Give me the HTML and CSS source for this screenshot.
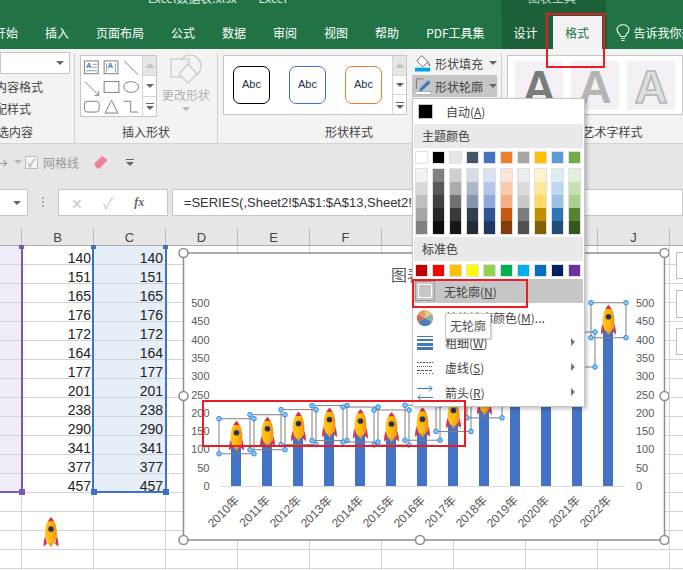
FILE: index.html
```html
<!DOCTYPE html>
<html lang="zh-CN">
<head>
  <meta charset="UTF-8">
  <title>Excel数据表.xlsx - Excel</title>
  <link rel="stylesheet" href="styles.css">
</head>
<body>
<svg class="defs" width="0" height="0">
  <defs>
    <linearGradient id="bodyGrad" x1="0" x2="1" y1="0" y2="0">
      <stop offset="0" stop-color="#ffc61a"/>
      <stop offset="0.55" stop-color="#fdb813"/>
      <stop offset="1" stop-color="#f08c0a"/>
    </linearGradient>
    <symbol id="rocket" viewBox="0 0 16 31">
      <path d="M2.200 19C1 22 .4 26 .6 30C1.500 28.500 2.600 27.600 4 27Z" fill="#e0314a"/>
      <path d="M13.800 19C15 22 15.600 26 15.400 30C14.500 28.500 13.400 27.600 12 27Z" fill="#e0314a"/>
      <path d="M5 25.500H11L8 30.500Z" fill="#f7941d"/>
      <path d="M4.800 4C2.600 8 1.800 15 2.200 19C2.600 22.500 4.300 25 5.300 26.500H10.700C11.700 25 13.400 22.500 13.800 19C14.200 15 13.400 8 11.200 4Z" fill="url(#bodyGrad)"/>
      <path d="M8 0C7 1 6 2.500 4.900 4.300H11.100C10 2.500 9 1 8 0Z" fill="#dc2f45"/>
      <circle cx="8" cy="12" r="3.400" fill="#e8900c"/>
      <circle cx="8" cy="12" r="2.600" fill="#1d2f5f"/>
    </symbol>
  </defs>
</svg>

<div class="title-bar">
  <span class="doc-name">Excel数据表.xlsx</span>
  <span class="app-name">Excel</span>
  <span class="context-name">图表工具</span>
</div>

<div class="tab-bar">
  <span class="tab tab-cut">开始</span>
  <span class="tab">插入</span>
  <span class="tab">页面布局</span>
  <span class="tab">公式</span>
  <span class="tab">数据</span>
  <span class="tab">审阅</span>
  <span class="tab">视图</span>
  <span class="tab">帮助</span>
  <span class="tab">PDF工具集</span>
  <div class="context-tabs">
    <span class="tab">设计</span>
    <span class="tab tab-active">格式</span>
  </div>
  <div class="tell-me">
    <svg width="14" height="18" viewBox="0 0 14 18" fill="none" stroke="#fff" stroke-width="1.100">
      <path d="M4.500 12.500C4.500 10 1 9 1 5.600C1 2.800 3.700 .8 7 .8S13 2.800 13 5.600C13 9 9.500 10 9.500 12.500Z"/>
      <path d="M5 14.500H9M5.500 16.500H8.500"/>
    </svg>
    <span>告诉我你想要做什么</span>
  </div>
</div>

<div class="ribbon">
  <div class="group group-left">
    <div class="combo"><i class="arrow"></i></div>
    <div class="cut cut-a">内容格式</div>
    <div class="cut cut-b">配样式</div>
    <div class="cut cut-c">选内容</div>
  </div>

  <div class="group group-shapes">
    <div class="group-main">
      <div class="shape-gallery">
        <svg width="62" height="60" viewBox="0 0 62 60" fill="none" stroke="#7f7f7f">
          <rect x="3.500" y="4.500" width="14" height="13"/>
          <path d="M12 8H16M12 11H16M5 14.500H16" stroke="#999"/>
          <text x="5" y="12" class="shape-a" stroke="none">A</text>
          <rect x="23.500" y="4.500" width="14" height="13"/>
          <path d="M26 7V16M35 7V16" stroke="#999"/>
          <text x="27" y="12" class="shape-a" stroke="none">A</text>
          <path d="M44 4.500L58 18.500M4 25.500L18 39.500M18 39.500V35M18 39.500H13.500"/>
          <rect x="23.500" y="25.500" width="15" height="11"/>
          <ellipse cx="51" cy="31" rx="7.500" ry="5.500"/>
          <rect x="3.500" y="45.500" width="15" height="11" rx="3"/>
          <path d="M31 44.500L37.500 57.500H24.500Z"/>
          <path d="M43 45.500H50.500V56.500H58"/>
        </svg>
        <div class="gallery-scroll">
          <span class="scroll-btn scroll-off"><i class="arrow-up"></i></span>
          <span class="scroll-btn"><i class="arrow"></i></span>
          <span class="scroll-btn"><i class="arrow-more"></i></span>
        </div>
      </div>
      <div class="change-shape">
        <svg width="32" height="30" viewBox="0 0 32 30" fill="#f3f3f3" stroke="#c9c9c9" stroke-width="1.200">
          <circle cx="20" cy="12" r="11"/>
          <rect x="1" y="5" width="18" height="18"/>
          <path d="M18 10L27 20L18 29L9 20Z" fill="#f5f5f5"/>
        </svg>
        <span>更改形状</span>
        <i class="arrow arrow-off"></i>
      </div>
    </div>
    <div class="group-label">插入形状</div>
  </div>

  <div class="group group-styles">
    <div class="group-main">
      <div class="style-gallery">
        <div class="abc-list">
          <span class="abc abc-black">Abc</span>
          <span class="abc abc-blue">Abc</span>
          <span class="abc abc-orange">Abc</span>
        </div>
        <div class="gallery-scroll">
          <span class="scroll-btn scroll-off"><i class="arrow-up"></i></span>
          <span class="scroll-btn"><i class="arrow"></i></span>
          <span class="scroll-btn"><i class="arrow-more"></i></span>
        </div>
      </div>
      <div class="style-cmds">
        <div class="cmd">
          <svg width="18" height="18" viewBox="0 0 18 18">
            <path d="M7 1L14 8L8 13L2 7Z" fill="#fff" stroke="#666"/>
            <path d="M14 8C15.500 10 16.500 11 16 12.500C15 13 14 11 14 8Z" fill="#666"/>
            <rect x="0" y="14" width="16" height="4" fill="#00a2e8"/>
          </svg>
          <span>形状填充</span>
          <i class="arrow"></i>
        </div>
        <div class="cmd cmd-open">
          <svg width="18" height="18" viewBox="0 0 18 18">
            <path d="M1.500 1.500H9M1.500 1.500V12" stroke="#777" fill="none"/>
            <path d="M5 12L14 3L16.500 5.500L7.500 14L4.500 14.800Z" fill="#3f79c2"/>
            <rect x="0" y="15" width="17" height="3" fill="#fff" stroke="#888" stroke-width=".5"/>
          </svg>
          <span>形状轮廓</span>
          <i class="arrow"></i>
        </div>
      </div>
    </div>
    <div class="group-label label-styles">形状样式</div>
  </div>

  <div class="group group-art">
    <div class="art-gallery">
      <span class="art art-dark">A</span>
      <span class="art art-light">A</span>
      <span class="art art-outline">A</span>
    </div>
    <div class="group-label label-art">艺术字样式</div>
  </div>
</div>

<div class="quick-bar">
  <span class="quick-arrow">→</span>
  <i class="arrow arrow-off"></i>
  <span class="check">✓</span>
  <span class="quick-text">网格线</span>
  <svg class="eraser" width="14" height="14" viewBox="0 0 14 14">
    <path d="M0 9L8 1L13.500 5L5.500 13.500H3Z" fill="#ec8296"/>
  </svg>
  <i class="arrow-more quick-more"></i>
</div>

<div class="formula-bar">
  <div class="name-box"><i class="arrow"></i></div>
  <span class="dots"></span>
  <div class="fx-box">
    <span class="fx-cancel">✕</span>
    <span class="fx-enter">✓</span>
    <span class="fx-label">fx</span>
  </div>
  <div class="formula-input">=SERIES(,Sheet2!$A$1:$A$13,Sheet2!$B$1:$B$13,1)</div>
</div>

<div class="sheet">
  <div class="col-head" id="colHead"></div>
  <div id="rows"></div>

  <div class="sel sel-a"></div>
  <div class="sel sel-c"></div>
  <i class="grip grip-purple grip-a1"></i>
  <i class="grip grip-purple grip-a2"></i>
  <i class="grip grip-b1"></i>
  <i class="grip grip-c1"></i>
  <i class="grip grip-b2"></i>
  <i class="grip grip-c2"></i>

  <svg class="sheet-rocket" width="16" height="31"><use href="#rocket"/></svg>
</div>

<div class="flyout flyout-1"></div>
<div class="flyout flyout-2"></div>
<div class="flyout flyout-3"></div>

<div class="chart">
  <svg id="chart" width="491" height="298" viewBox="178 247 491 298"></svg>
</div>

<div class="menu">
  <div class="menu-auto">
    <span class="auto-swatch"></span>
    <span>自动(<u>A</u>)</span>
  </div>
  <div class="menu-head">主题颜色</div>
  <div class="palette theme-row" id="themeRow"></div>
  <div class="palette shade-row" id="shadeRow"></div>
  <div class="menu-head std-head">标准色</div>
  <div class="palette std-row" id="stdRow"></div>
  <div class="menu-item menu-none">
    <span class="none-icon"><i></i></span>
    <span>无轮廓(<u>N</u>)</span>
  </div>
  <div class="menu-item">
    <span class="item-icon">
      <svg width="16" height="16" viewBox="0 0 16 16">
        <path d="M8 8L8 0A8 8 0 0 1 15 4Z" fill="#e6c98c"/>
        <path d="M8 8L15 4A8 8 0 0 1 15 12Z" fill="#8fb39a"/>
        <path d="M8 8L15 12A8 8 0 0 1 1 12Z" fill="#4f7fb8"/>
        <path d="M8 8L1 12A8 8 0 0 1 1 4Z" fill="#d9694f"/>
        <path d="M8 8L1 4A8 8 0 0 1 8 0Z" fill="#e79a6c"/>
      </svg>
    </span>
    <span>其他轮廓颜色(<u>M</u>)...</span>
  </div>
  <div class="menu-item">
    <span class="item-icon">
      <svg width="16" height="14" viewBox="0 0 16 14" fill="#3f79b8">
        <rect y="0" width="16" height="1"/><rect y="3" width="16" height="2"/><rect y="7" width="16" height="3"/><rect y="11" width="16" height="3"/>
      </svg>
    </span>
    <span>粗细(<u>W</u>)</span>
    <i class="sub-arrow"></i>
  </div>
  <div class="menu-item">
    <span class="item-icon">
      <svg width="16" height="12" viewBox="0 0 16 12" stroke="#555" fill="none">
        <path d="M0 .5H16" stroke-dasharray="2 1"/><path d="M0 4.500H16" stroke-dasharray="1 1"/><path d="M0 8.500H16" stroke-dasharray="3 1"/><path d="M0 11.500H16" stroke-dasharray="1 2"/>
      </svg>
    </span>
    <span>虚线(<u>S</u>)</span>
    <i class="sub-arrow"></i>
  </div>
  <div class="menu-item">
    <span class="item-icon">
      <svg width="16" height="16" viewBox="0 0 16 16" stroke="#3f79b8" fill="none">
        <path d="M0 3.500H15M12 .5L15 3.500L12 6.500M16 12.500H1M4 9.500L1 12.500L4 15.500"/>
      </svg>
    </span>
    <span>箭头(<u>R</u>)</span>
    <i class="sub-arrow"></i>
  </div>
</div>

<div class="tooltip">无轮廓</div>

<div class="mark mark-tab"></div>
<div class="mark mark-none"></div>
<div class="mark mark-chart"></div>

<script src="script.js"></script>
</body>
</html>
```

FILE: styles.css
```css
* {
  box-sizing: border-box;
}
html, body {
  margin: 0;
  height: 100%;
  overflow: hidden;
}
body {
  position: relative;
  width: 683px;
  height: 570px;
  background: #e6e6e6;
  color: #444;
  font: 12px "Noto Sans CJK SC", "Liberation Sans", sans-serif;
  overflow: hidden;
}
i {
  display: block;
}
.defs {
  position: absolute;
}

/* arrows */
.arrow {
  width: 0;
  height: 0;
  border-left: 4px solid transparent;
  border-right: 4px solid transparent;
  border-top: 4px solid #666;
}
.arrow-off {
  border-top-color: #b5b5b5;
}
.arrow-up {
  width: 0;
  height: 0;
  border-left: 5px solid transparent;
  border-right: 5px solid transparent;
  border-bottom: 5px solid #c4c4c4;
}
.arrow-more {
  width: 8px;
  height: 6px;
  border-top: 1px solid #666;
  position: relative;
}
.arrow-more::after {
  content: "";
  position: absolute;
  left: 0;
  top: 2px;
  border-left: 4px solid transparent;
  border-right: 4px solid transparent;
  border-top: 4px solid #666;
}

/* title and tabs */
.title-bar {
  height: 16px;
  background: linear-gradient(90deg, #217346 501px, #1b6039 501px, #1b6039 606px, #217346 606px);
  color: #dfeee5;
  font-size: 12px;
  line-height: 16px;
  overflow: hidden;
  display: flex;
  padding-left: 148px;
  position: relative;
}
.title-bar span {
  margin-top: -10px;
}
.app-name {
  margin-left: 22px;
}
.context-name {
  margin-left: 241px;
  color: #b9d5c5;
}
.tab-bar {
  height: 33px;
  background: #217346;
  color: #fff;
  display: flex;
  align-items: center;
  gap: 27px;
  overflow: hidden;
}
.tab {
  line-height: 33px;
  white-space: nowrap;
}
.tab-cut {
  margin-left: -6px;
}
.context-tabs {
  display: flex;
  margin-left: -10px;
  height: 33px;
  background: #1b6039;
  padding-left: 12px;
  gap: 15px;
  width: 105px;
  flex: none;
}
.tab-active {
  width: 49px;
  height: 33px;
  background: #f3f3f3;
  color: #217346;
  text-align: center;
  flex: none;
}
.tell-me {
  display: flex;
  align-items: center;
  gap: 4px;
  margin-left: -18px;
  white-space: nowrap;
}

/* ribbon */
.ribbon {
  height: 95px;
  background: #f3f3f3;
  border-bottom: 1px solid #d4d4d4;
  display: flex;
  overflow: hidden;
}
.group {
  position: relative;
  height: 90px;
  margin-top: 4px;
  border-right: 1px solid #d0d0d0;
  flex: none;
}
.group-left {
  width: 75px;
}
.combo {
  width: 70px;
  height: 22px;
  margin-top: -1px;
  background: #fff;
  border: 1px solid #c6c6c6;
  display: flex;
  align-items: center;
  justify-content: flex-end;
  padding-right: 5px;
}
.cut {
  line-height: 22px;
  white-space: nowrap;
}
.cut-a {
  margin: 2px 0 0 -5px;
}
.cut-b {
  margin-left: -5px;
}
.cut-c {
  margin: 1px 0 0 -3px;
}
.group-shapes {
  width: 143px;
}
.group-main {
  display: flex;
  height: 66px;
}
.group-label {
  text-align: center;
  line-height: 20px;
  margin-top: 3px;
}
.shape-gallery {
  display: flex;
  width: 77px;
  height: 62px;
  margin: 2px 0 0 5px;
  border: 1px solid #c6c6c6;
  background: #fff;
  flex: none;
}
.shape-a {
  font: bold 8px "Liberation Sans", sans-serif;
  fill: #3f79c2;
}
.gallery-scroll {
  width: 14px;
  display: flex;
  flex-direction: column;
  border-left: 1px solid #d4d4d4;
  margin-left: auto;
  flex: none;
}
.scroll-btn {
  flex: 1;
  display: flex;
  align-items: center;
  justify-content: center;
  border-bottom: 1px solid #d4d4d4;
}
.scroll-btn:last-child {
  border-bottom: 0;
}
.scroll-off {
  background: #e6e6e6;
}
.change-shape {
  width: 48px;
  margin: 1px 0 0 5px;
  color: #b1b1b1;
  display: flex;
  flex-direction: column;
  align-items: center;
  white-space: nowrap;
}
.change-shape svg {
  margin-bottom: 2px;
}
.change-shape .arrow {
  margin-top: 4px;
}

.group-styles {
  width: 284px;
}
.style-gallery {
  display: flex;
  width: 184px;
  height: 60px;
  margin: 2px 0 0 5px;
  border: 1px solid #c6c6c6;
  background: #fff;
  flex: none;
}
.abc-list {
  display: flex;
  gap: 19px;
  padding: 10px 0 0 9px;
}
.abc {
  width: 37px;
  height: 38px;
  border: 1px solid #000;
  border-radius: 7px;
  background: #fff;
  color: #1b2d4a;
  font: 11px/34px "Liberation Sans", sans-serif;
  text-align: center;
}
.abc-blue {
  border-color: #4472c4;
}
.abc-orange {
  border-color: #ed7d31;
}
.style-cmds {
  margin: -1px 0 0 5px;
  width: 85px;
}
.cmd {
  height: 22px;
  display: flex;
  align-items: center;
  padding-left: 3px;
  gap: 3px;
  white-space: nowrap;
}
.cmd-open {
  background: #c6c6c6;
  margin-top: 1px;
}
.cmd .arrow {
  margin-left: 3px;
}
.label-styles {
  width: 262px;
}
.group-art {
  flex: 1;
  border-right: 0;
}
.art-gallery {
  display: flex;
  gap: 8px;
  height: 60px;
  margin: 2px 0 0 5px;
  padding: 5px 0 0 7px;
  border: 1px solid #c6c6c6;
  background: #fff;
  overflow: hidden;
}
.art {
  width: 48px;
  height: 49px;
  background: #f4f0f6;
  text-align: center;
  font: bold 46px/52px "Liberation Sans", sans-serif;
  flex: none;
}
.art-dark {
  color: #7b7b7b;
}
.art-light {
  color: #b4b4b4;
}
.art-outline {
  color: #dfdfdf;
  -webkit-text-stroke: 1.5px #b4b4b4;
}
.label-art {
  margin-top: 7px;
  padding-left: 40px;
}

/* quick toolbar */
.quick-bar {
  height: 36px;
  display: flex;
  align-items: center;
  color: #9a9a9a;
}
.quick-arrow {
  margin-left: -6px;
  font-size: 14px;
}
.quick-bar .arrow {
  margin-left: 6px;
}
.check {
  width: 13px;
  height: 13px;
  margin-left: 3px;
  background: #f3f3f3;
  border: 1px solid #bbb;
  line-height: 11px;
  text-align: center;
  font-size: 11px;
}
.quick-text {
  margin-left: 5px;
  font-size: 12px;
}
.eraser {
  margin-left: 15px;
}
.quick-more {
  margin-left: 18px;
}

/* formula bar */
.formula-bar {
  height: 48px;
  padding-top: 9px;
  display: flex;
  align-items: flex-start;
}
.name-box {
  width: 28px;
  height: 27px;
  background: #fff;
  border: 1px solid #c6c6c6;
  border-left: 0;
  display: flex;
  align-items: center;
  justify-content: flex-end;
  padding-right: 6px;
}
.dots {
  width: 2px;
  height: 10px;
  margin: 8px 0 0 14px;
  background: repeating-linear-gradient(#aaa 0 2px, transparent 2px 4px);
}
.fx-box {
  width: 110px;
  height: 27px;
  margin-left: 14px;
  background: #fff;
  border: 1px solid #c6c6c6;
  display: flex;
  align-items: center;
  color: #c6c6c6;
}
.fx-cancel {
  margin-left: 12px;
  font-size: 14px;
}
.fx-enter {
  margin-left: 20px;
  font-size: 15px;
}
.fx-label {
  margin-left: 21px;
  color: #666;
  font: italic bold 12px "Liberation Serif", serif;
}
.formula-input {
  width: 512px;
  height: 27px;
  margin-left: 4px;
  background: #fff;
  border: 1px solid #c6c6c6;
  padding-left: 11px;
  color: #333;
  font: 13px/25px "Liberation Sans", sans-serif;
  white-space: nowrap;
  overflow: hidden;
}

/* sheet */
.sheet {
  position: relative;
  height: 342px;
  background: #fff;
  overflow: hidden;
}
.col-head, .row {
  display: grid;
  grid-template-columns: 22px repeat(10, 72px);
}
.col-head {
  height: 18px;
  background: #e6e6e6;
  border-bottom: 1px solid #ababab;
  text-align: center;
  color: #444;
  font: 13px/19px "Liberation Sans", sans-serif;
}
.col-head span {
  border-right: 1px solid #bdbdbd;
}
.row {
  height: 19px;
}
.row span {
  border-right: 1px solid #d4d4d4;
  border-bottom: 1px solid #d4d4d4;
  padding-right: 2px;
  text-align: right;
  color: #222;
  font: 14px/24px "Liberation Sans", sans-serif;
  overflow: hidden;
}
.row .cell-a {
  background: #f1edf8;
}
.row .cell-c {
  background: #e6eef8;
}
.sel {
  position: absolute;
  top: 18px;
  height: 247px;
  border-bottom: 2px solid;
  border-right: 2px solid;
}
.sel-a {
  left: 0;
  width: 23px;
  border-color: #7e57b5;
}
.sel-c {
  left: 92px;
  width: 75px;
  border-left: 2px solid;
  border-color: #3e70c4;
}
.grip {
  position: absolute;
  width: 5px;
  height: 4px;
  background: #3e70c4;
  top: 17px;
}
.grip-purple {
  background: #7e57b5;
}
.grip-a1 { left: 19px; }
.grip-b1 { left: 91px; }
.grip-c1 { left: 163px; }
.grip-a2, .grip-b2, .grip-c2 {
  top: 261px;
  height: 6px;
  width: 6px;
}
.grip-a2 { left: 19px; }
.grip-b2 { left: 91px; }
.grip-c2 { left: 163px; }
.sheet-rocket {
  position: absolute;
  left: 43px;
  top: 289px;
}
.flyout {
  position: absolute;
  left: 676px;
  width: 7px;
  height: 27px;
  background: #fff;
  border: 1px solid #bdbdbd;
  border-right: 0;
}
.flyout-1 { top: 252px; }
.flyout-2 { top: 290px; height: 28px; }
.flyout-3 { top: 328px; }

/* chart sits over the grid */
.chart {
  position: absolute;
  left: 178px;
  top: 247px;
  width: 491px;
  height: 298px;
}
.chart-text {
  fill: #595959;
  font: 11px "Liberation Sans", sans-serif;
}
.chart-cat {
  fill: #595959;
  font: 12px "Liberation Sans", "Noto Sans CJK SC", sans-serif;
}
.chart-title {
  fill: #595959;
  font: 16px "Noto Sans CJK SC", sans-serif;
}

/* dropdown */
.menu {
  position: absolute;
  left: 412px;
  top: 98px;
  width: 173px;
  height: 309px;
  background: #fff;
  border: 1px solid #c6c6c6;
  box-shadow: 2px 2px 4px rgba(0, 0, 0, .25);
}
.menu-auto {
  height: 25px;
  display: flex;
  align-items: center;
}
.auto-swatch {
  width: 15px;
  height: 15px;
  margin: 0 13px 0 5px;
  background: #000;
  border: 1px solid #c6c6c6;
}
.menu-head {
  height: 24px;
  line-height: 24px;
  margin: 0 1px;
  padding-left: 8px;
  background: #e9e9e9;
  font-size: 12px;
  font-weight: 500;
  color: #555;
}
.palette {
  display: grid;
  grid-template-columns: repeat(10, 13px);
  column-gap: 4px;
  padding-left: 2px;
}
.theme-row {
  margin-top: 3px;
}
.shade-row {
  margin-top: 4px;
}
.std-head {
  margin-top: 2px;
}
.std-row {
  margin-top: 3px;
}
.swatch {
  height: 13px;
  border: 1px solid #e1e1e1;
}
.shade-col {
  height: 67px;
  border: 1px solid #e1e1e1;
  display: flex;
  flex-direction: column;
}
.shade-col b {
  flex: 1;
}
.menu-item {
  height: 25px;
  display: flex;
  align-items: center;
  white-space: nowrap;
  position: relative;
}
.menu-none {
  height: 24px;
  margin: 2px 1px 2px;
  background: #c6c6c6;
}
.none-icon {
  width: 20px;
  height: 20px;
  margin: 0 9px 0 1px;
  border: 1px solid #9a9a9a;
  padding: 2px;
}
.none-icon i {
  height: 14px;
  border: 1px solid #fff;
}
.item-icon {
  width: 32px;
  padding-left: 4px;
  display: flex;
  align-items: center;
}
.sub-arrow {
  position: absolute;
  left: 158px;
  top: 8px;
  border-left: 4px solid #777;
  border-top: 4px solid transparent;
  border-bottom: 4px solid transparent;
}
.tooltip {
  position: absolute;
  left: 445px;
  top: 313px;
  width: 46px;
  height: 26px;
  background: #fff;
  border: 1px solid #c8c8c8;
  box-shadow: 1px 1px 2px rgba(0, 0, 0, .2);
  text-align: center;
  line-height: 24px;
  color: #555;
}

/* red annotation boxes */
.mark {
  position: absolute;
  border: 2px solid #ec1c24;
}
.mark-tab {
  left: 546px;
  top: 13px;
  width: 59px;
  height: 55px;
}
.mark-none {
  left: 412px;
  top: 279px;
  width: 116px;
  height: 29px;
}
.mark-chart {
  left: 202px;
  top: 400px;
  width: 264px;
  height: 47px;
}
```

FILE: script.js
```js
var theme = ["#ffffff", "#000000", "#e7e6e6", "#44546a", "#4472c4", "#ed7d31", "#a5a5a5", "#ffc000", "#5b9bd5", "#70ad47"];
var shades = [
  ["#f2f2f2", "#d9d9d9", "#bfbfbf", "#a6a6a6", "#808080"],
  ["#808080", "#595959", "#404040", "#262626", "#0d0d0d"],
  ["#d0cece", "#afabab", "#767171", "#3b3838", "#171616"],
  ["#d6dce4", "#adb9ca", "#8497b0", "#333f4f", "#222b35"],
  ["#d9e1f2", "#b4c6e7", "#8ea9db", "#2f5496", "#203764"],
  ["#fce4d6", "#f8cbad", "#f4b084", "#c65911", "#833c0b"],
  ["#ededed", "#dbdbdb", "#c9c9c9", "#7b7b7b", "#525252"],
  ["#fff2cc", "#ffe699", "#ffd966", "#bf8f00", "#806000"],
  ["#ddebf7", "#bdd7ee", "#9bc2e6", "#2f75b5", "#1f4e78"],
  ["#e2efda", "#c6e0b4", "#a9d08e", "#548235", "#375623"]
];
var standard = ["#c00000", "#ff0000", "#ffc000", "#ffff00", "#92d050", "#00b050", "#00b0f0", "#0070c0", "#002060", "#7030a0"];
var values = [140, 151, 165, 176, 172, 164, 177, 201, 238, 290, 341, 377, 457];

function fillRow(id, colors) {
  var row = document.getElementById(id);
  colors.forEach(function (c) {
    var s = document.createElement("span");
    s.className = "swatch";
    s.style.background = c;
    row.appendChild(s);
  });
}
fillRow("themeRow", theme);
fillRow("stdRow", standard);

var shadeRow = document.getElementById("shadeRow");
shades.forEach(function (col) {
  var box = document.createElement("span");
  box.className = "shade-col";
  col.forEach(function (c) {
    var b = document.createElement("b");
    b.style.background = c;
    box.appendChild(b);
  });
  shadeRow.appendChild(box);
});

/* sheet */
var letters = ["", "B", "C", "D", "E", "F", "G", "H", "I", "J", ""];
var head = document.getElementById("colHead");
letters.forEach(function (l) {
  var s = document.createElement("span");
  s.textContent = l;
  head.appendChild(s);
});
var rows = document.getElementById("rows");
for (var r = 0; r < 18; r++) {
  var row = document.createElement("div");
  row.className = "row";
  for (var c = 0; c < 11; c++) {
    var cell = document.createElement("span");
    if (r < values.length) {
      if (c == 0) cell.className = "cell-a";
      if (c == 2) cell.className = "cell-c";
      if (c == 1 || c == 2) cell.textContent = values[r];
    }
    row.appendChild(cell);
  }
  rows.appendChild(row);
}

/* chart, drawn in page coordinates */
var chart = document.getElementById("chart");
var NS = "http://www.w3.org/2000/svg";
function add(tag, attrs, text) {
  var el = document.createElementNS(NS, tag);
  for (var k in attrs) el.setAttribute(k, attrs[k]);
  if (text !== undefined) el.textContent = text;
  chart.appendChild(el);
  return el;
}
function yOf(v) {
  return 486 - v * 0.366;
}

add("rect", { x: 183.5, y: 253, width: 481, height: 287, fill: "#fff", stroke: "#8f8f8f", "stroke-width": 1.5 });
[[183.5, 253], [423, 253], [664.5, 253], [183.5, 396], [664.5, 396], [183.5, 540], [420, 540], [664.5, 540]].forEach(function (p) {
  add("circle", { cx: p[0], cy: p[1], r: 4.5, fill: "#fff", stroke: "#8f8f8f", "stroke-width": 1.6 });
});

add("text", { x: 423, y: 281, "text-anchor": "middle", "class": "chart-title" }, "图表标题");
for (var v = 0; v <= 500; v += 50) {
  add("text", { x: 209.5, y: yOf(v) + 4, "text-anchor": "end", "class": "chart-text" }, v);
  add("text", { x: 636, y: yOf(v) + 4, "class": "chart-text" }, v);
}
add("path", { d: "M220 486.500H625", stroke: "#d9d9d9", fill: "none" });

values.forEach(function (val, i) {
  var x = 236 + i * 31;
  add("rect", { x: x - 5, y: yOf(val), width: 10, height: 486 - yOf(val), fill: "#4472c4" });
  add("text", {
    x: x + 4, y: 501, "text-anchor": "end", "class": "chart-cat",
    transform: "rotate(-45 " + (x + 4) + " 501)"
  }, (2010 + i) + "年");
});

values.forEach(function (val, i) {
  var x = 236.5 + i * 31;
  var y = yOf(val) + 1.5;
  add("use", { href: "#rocket", x: x - 8, y: y - 15.5, width: 16, height: 31 });
  add("rect", { x: x - 17.5, y: y - 17.5, width: 35, height: 35, fill: "none", stroke: "#7f7f7f" });
  [[-17.5, -17.5], [17.5, -17.5], [-17.5, 17.5], [17.5, 17.5]].forEach(function (d) {
    add("circle", { cx: x + d[0], cy: y + d[1], r: 2.3, fill: "#8cc8f5", stroke: "#2b8be0", "stroke-width": 1 });
  });
});
```
